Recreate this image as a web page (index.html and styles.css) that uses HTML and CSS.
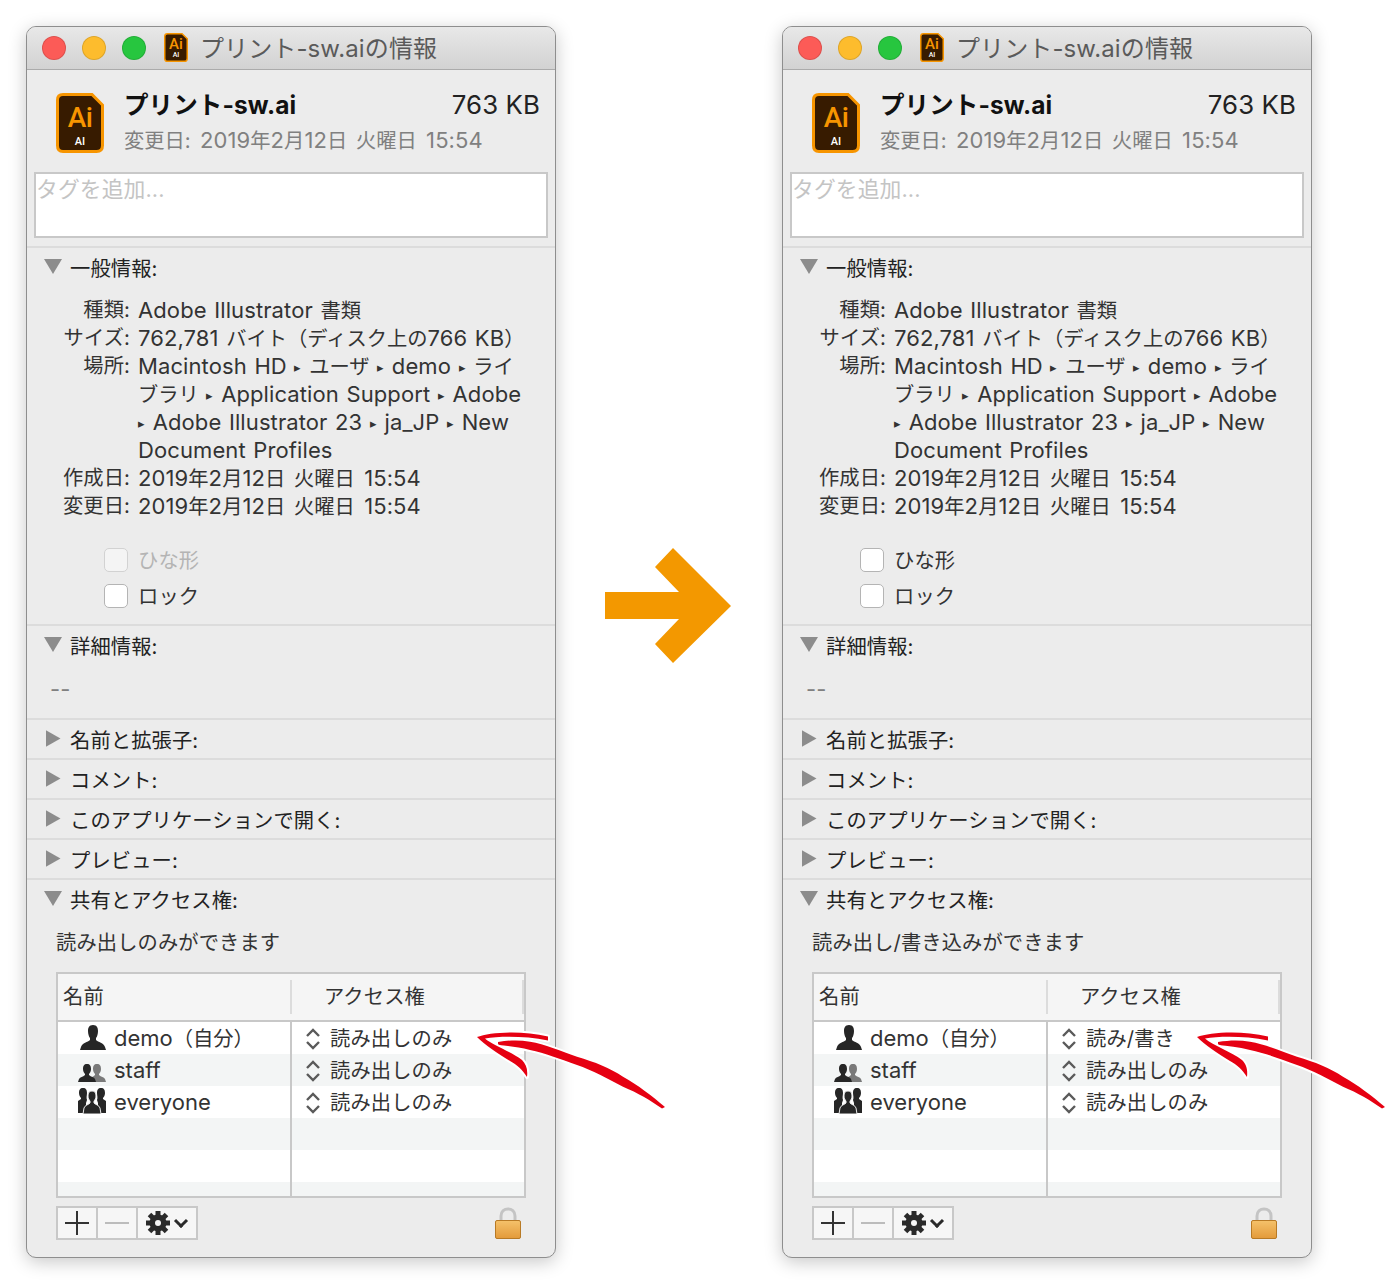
FILE: index.html
```html
<!DOCTYPE html>
<html lang="ja">
<head>
    <meta charset="UTF-8">
    <title>プリント-sw.aiの情報</title>
    <link rel="stylesheet" href="styles.css">
</head>
<body>
    <!-- shared icons -->
    <svg class="icon-defs" width="0" height="0">
        <defs>
            <linearGradient id="lock-body" x1="0" y1="0" x2="0" y2="1">
                <stop offset="0" stop-color="#f5c26b"/>
                <stop offset="1" stop-color="#e39a3a"/>
            </linearGradient>
        </defs>
        <symbol id="ai-doc" viewBox="0 0 48 60" preserveAspectRatio="none">
            <path d="M7 1.500H36L46.500 12V52.500Q46.500 58.500 40.500 58.500H7Q1.500 58.500 1.500 52.500V7Q1.500 1.500 7 1.500Z" fill="#371b00" stroke="#f79500" stroke-width="3"/>
        </symbol>
        <symbol id="chevrons" viewBox="0 0 16 24">
            <path d="M2 9L8 3L14 9M2 15L8 21L14 15" fill="none" stroke="#5a5a5a" stroke-width="2.400"/>
        </symbol>
        <symbol id="person" viewBox="0 0 28 26">
            <path d="M14 0C10 0 9 3 9 6C9 9 10 12 11 13V15C9 17 3 18 2 22L1 25H27L26 22C25 18 19 17 17 15V13C18 12 19 9 19 6C19 3 18 0 14 0Z" fill="#262626"/>
        </symbol>
        <symbol id="pair" viewBox="0 0 28 20">
            <path d="M19 2C16 2 15 4 15 7C15 9 16 11 17 12V13C15 15 13 15 12 17L13 20H28L27 17C26 15 23 15 21 13V12C22 11 23 9 23 7C23 4 22 2 19 2Z" fill="#7a7a7a"/>
            <path d="M9 2C6 2 5 4 5 7C5 9 6 11 7 12V13C5 15 2 15 1 17L0 20H18L17 17C16 15 13 15 11 13V12C12 11 13 9 13 7C13 4 12 2 9 2Z" fill="#262626"/>
        </symbol>
        <symbol id="group" viewBox="0 0 28 26">
            <path d="M5 0C2 0 1 2 1 5C1 7 2 9 3 10V11L0 13V25H8V15L9 12C8 10 9 7 9 5C9 2 8 0 5 0Z" fill="#262626"/>
            <path d="M23 0C26 0 27 2 27 5C27 7 26 9 25 10V11L28 13V25H20V15L19 12C20 10 19 7 19 5C19 2 20 0 23 0Z" fill="#262626"/>
            <path d="M14 3C11 3 10 5 10 8C10 10 11 12 12 13V15C10 17 7 17 6 20L5 26H23L22 20C21 17 18 17 16 15V13C17 12 18 10 18 8C18 5 17 3 14 3Z" fill="#262626" stroke="#ececec" stroke-width="1"/>
        </symbol>
        <symbol id="gear" viewBox="0 0 24 24">
            <g stroke="#2a2a2a" stroke-width="5">
                <path d="M12 0V24M0 12H24M3.500 3.500L20.500 20.500M20.500 3.500L3.500 20.500"/>
            </g>
            <circle cx="12" cy="12" r="8.500" fill="#2a2a2a"/>
            <circle cx="12" cy="12" r="3" fill="#f6f6f6"/>
        </symbol>
        <symbol id="lock" viewBox="0 0 26 32">
            <path d="M6 14V9C6 -0.500 20 -0.500 20 9V14" fill="none" stroke="#c4c4c4" stroke-width="3"/>
            <rect x="0.500" y="13.500" width="25" height="18" rx="1.500" fill="url(#lock-body)" stroke="#b87a25"/>
        </symbol>
        <symbol id="red-arrow" viewBox="0 0 200 90">
            <g fill="#e60012" stroke="#fff" stroke-width="4" stroke-linejoin="round" paint-order="stroke">
                <path d="M28 17C40 15 50 15 60 16.700C75 19 90 26 107 31.700C125 37 140 43 153 51.700C168 60 182 71 195 82L192 83.500C180 75 168 68 153 61.700C138 54 122 45 107 40C90 34 75 28 60 25C48 22 38 21 28 20Z"/>
                <path d="M7 12C20 7 52 5 78 11.500L78 15.500C56 11 30 11 15 13.500C22 20 42 27 52 35C56 39 58 44 57 52C52 44 47 40 40 36C27 28 15 20 7 12Z"/>
            </g>
        </symbol>
    </svg>

    <main class="page">
        <!-- before -->
        <article class="window">
            <header class="titlebar">
                <span class="light light-red"></span>
                <span class="light light-yellow"></span>
                <span class="light light-green"></span>
                <span class="ai-icon ai-icon-small"><svg class="ai-doc"><use href="#ai-doc"/></svg><b class="ai-big">Ai</b><b class="ai-tag">AI</b></span>
                <span class="title-text">プリント-sw.aiの情報</span>
            </header>
            <div class="file-head">
                <span class="ai-icon"><svg class="ai-doc"><use href="#ai-doc"/></svg><b class="ai-big">Ai</b><b class="ai-tag">AI</b></span>
                <div class="file-meta">
                    <div class="file-line">
                        <strong class="file-name">プリント-sw.ai</strong>
                        <span class="file-size">763 KB</span>
                    </div>
                    <div class="file-date"><span class="ja">変更日:</span> 2019<span class="ja">年</span>2<span class="ja">月</span>12<span class="ja">日 火曜日</span> 15:54</div>
                </div>
            </div>
            <div class="tags">タグを追加...</div>

            <section class="panel panel-general">
                <h2 class="panel-head"><span class="toggle"><i class="tri-down"></i></span>一般情報:</h2>
                <dl class="info">
                    <dt>種類:</dt><dd>Adobe Illustrator <span class="ja">書類</span></dd>
                    <dt>サイズ:</dt><dd>762,781 <span class="ja">バイト（ディスク上の</span>766 KB<span class="ja">）</span></dd>
                    <dt>場所:</dt><dd>Macintosh HD <b class="sep">▸</b> <span class="ja">ユーザ</span> <b class="sep">▸</b> demo <b class="sep">▸</b> <span class="ja">ライ</span><br><span class="ja">ブラリ</span> <b class="sep">▸</b> Application Support <b class="sep">▸</b> Adobe<br><b class="sep">▸</b> Adobe Illustrator 23 <b class="sep">▸</b> ja_JP <b class="sep">▸</b> New<br>Document Profiles</dd>
                    <dt>作成日:</dt><dd class="date">2019<span class="ja">年</span>2<span class="ja">月</span>12<span class="ja">日 火曜日</span> 15:54</dd>
                    <dt>変更日:</dt><dd class="date">2019<span class="ja">年</span>2<span class="ja">月</span>12<span class="ja">日 火曜日</span> 15:54</dd>
                </dl>
                <div class="checks">
                    <div class="check check-off"><span class="box"></span>ひな形</div>
                    <div class="check"><span class="box"></span>ロック</div>
                </div>
            </section>

            <section class="panel panel-detail">
                <h2 class="panel-head"><span class="toggle"><i class="tri-down"></i></span>詳細情報:</h2>
                <p class="dashes">--</p>
            </section>
            <section class="panel"><h2 class="panel-head"><span class="toggle"><i class="tri-right"></i></span>名前と拡張子:</h2></section>
            <section class="panel"><h2 class="panel-head"><span class="toggle"><i class="tri-right"></i></span>コメント:</h2></section>
            <section class="panel"><h2 class="panel-head"><span class="toggle"><i class="tri-right"></i></span>このアプリケーションで開く:</h2></section>
            <section class="panel"><h2 class="panel-head"><span class="toggle"><i class="tri-right"></i></span>プレビュー:</h2></section>

            <section class="panel">
                <h2 class="panel-head"><span class="toggle"><i class="tri-down"></i></span>共有とアクセス権:</h2>
                <p class="share-note">読み出しのみができます</p>
                <div class="perm-table">
                    <div class="perm-head">
                        <span class="col-name">名前</span>
                        <span class="col-perm">アクセス権</span>
                    </div>
                    <div class="perm-row">
                        <span class="cell-name"><svg class="who who-one"><use href="#person"/></svg>demo<span class="ja">（自分）</span></span>
                        <span class="cell-perm"><svg class="chev"><use href="#chevrons"/></svg>読み出しのみ</span>
                    </div>
                    <div class="perm-row">
                        <span class="cell-name"><svg class="who who-pair"><use href="#pair"/></svg>staff</span>
                        <span class="cell-perm"><svg class="chev"><use href="#chevrons"/></svg>読み出しのみ</span>
                    </div>
                    <div class="perm-row">
                        <span class="cell-name"><svg class="who who-group"><use href="#group"/></svg>everyone</span>
                        <span class="cell-perm"><svg class="chev"><use href="#chevrons"/></svg>読み出しのみ</span>
                    </div>
                    <div class="perm-row"><span class="cell-name"></span><span class="cell-perm"></span></div>
                    <div class="perm-row"><span class="cell-name"></span><span class="cell-perm"></span></div>
                    <div class="perm-row perm-row-cut"><span class="cell-name"></span><span class="cell-perm"></span></div>
                </div>
                <div class="perm-tools">
                    <div class="btn-group">
                        <span class="btn btn-add"></span>
                        <span class="btn btn-remove"></span>
                        <span class="btn btn-gear"><svg class="gear"><use href="#gear"/></svg><i class="gear-caret"></i></span>
                    </div>
                    <svg class="lock"><use href="#lock"/></svg>
                </div>
            </section>

            <svg class="red-arrow"><use href="#red-arrow"/></svg>
        </article>

        <div class="between">
            <svg class="big-arrow" viewBox="0 0 126 115">
                <polygon points="0,44 74,44 50,19 68,0 126,58 68,115 50,96 74,71 0,71" fill="#f39800"/>
            </svg>
        </div>

        <!-- after -->
        <article class="window">
            <header class="titlebar">
                <span class="light light-red"></span>
                <span class="light light-yellow"></span>
                <span class="light light-green"></span>
                <span class="ai-icon ai-icon-small"><svg class="ai-doc"><use href="#ai-doc"/></svg><b class="ai-big">Ai</b><b class="ai-tag">AI</b></span>
                <span class="title-text">プリント-sw.aiの情報</span>
            </header>
            <div class="file-head">
                <span class="ai-icon"><svg class="ai-doc"><use href="#ai-doc"/></svg><b class="ai-big">Ai</b><b class="ai-tag">AI</b></span>
                <div class="file-meta">
                    <div class="file-line">
                        <strong class="file-name">プリント-sw.ai</strong>
                        <span class="file-size">763 KB</span>
                    </div>
                    <div class="file-date"><span class="ja">変更日:</span> 2019<span class="ja">年</span>2<span class="ja">月</span>12<span class="ja">日 火曜日</span> 15:54</div>
                </div>
            </div>
            <div class="tags">タグを追加...</div>

            <section class="panel panel-general">
                <h2 class="panel-head"><span class="toggle"><i class="tri-down"></i></span>一般情報:</h2>
                <dl class="info">
                    <dt>種類:</dt><dd>Adobe Illustrator <span class="ja">書類</span></dd>
                    <dt>サイズ:</dt><dd>762,781 <span class="ja">バイト（ディスク上の</span>766 KB<span class="ja">）</span></dd>
                    <dt>場所:</dt><dd>Macintosh HD <b class="sep">▸</b> <span class="ja">ユーザ</span> <b class="sep">▸</b> demo <b class="sep">▸</b> <span class="ja">ライ</span><br><span class="ja">ブラリ</span> <b class="sep">▸</b> Application Support <b class="sep">▸</b> Adobe<br><b class="sep">▸</b> Adobe Illustrator 23 <b class="sep">▸</b> ja_JP <b class="sep">▸</b> New<br>Document Profiles</dd>
                    <dt>作成日:</dt><dd class="date">2019<span class="ja">年</span>2<span class="ja">月</span>12<span class="ja">日 火曜日</span> 15:54</dd>
                    <dt>変更日:</dt><dd class="date">2019<span class="ja">年</span>2<span class="ja">月</span>12<span class="ja">日 火曜日</span> 15:54</dd>
                </dl>
                <div class="checks">
                    <div class="check"><span class="box"></span>ひな形</div>
                    <div class="check"><span class="box"></span>ロック</div>
                </div>
            </section>

            <section class="panel panel-detail">
                <h2 class="panel-head"><span class="toggle"><i class="tri-down"></i></span>詳細情報:</h2>
                <p class="dashes">--</p>
            </section>
            <section class="panel"><h2 class="panel-head"><span class="toggle"><i class="tri-right"></i></span>名前と拡張子:</h2></section>
            <section class="panel"><h2 class="panel-head"><span class="toggle"><i class="tri-right"></i></span>コメント:</h2></section>
            <section class="panel"><h2 class="panel-head"><span class="toggle"><i class="tri-right"></i></span>このアプリケーションで開く:</h2></section>
            <section class="panel"><h2 class="panel-head"><span class="toggle"><i class="tri-right"></i></span>プレビュー:</h2></section>

            <section class="panel">
                <h2 class="panel-head"><span class="toggle"><i class="tri-down"></i></span>共有とアクセス権:</h2>
                <p class="share-note">読み出し/書き込みができます</p>
                <div class="perm-table">
                    <div class="perm-head">
                        <span class="col-name">名前</span>
                        <span class="col-perm">アクセス権</span>
                    </div>
                    <div class="perm-row">
                        <span class="cell-name"><svg class="who who-one"><use href="#person"/></svg>demo<span class="ja">（自分）</span></span>
                        <span class="cell-perm"><svg class="chev"><use href="#chevrons"/></svg>読み/書き</span>
                    </div>
                    <div class="perm-row">
                        <span class="cell-name"><svg class="who who-pair"><use href="#pair"/></svg>staff</span>
                        <span class="cell-perm"><svg class="chev"><use href="#chevrons"/></svg>読み出しのみ</span>
                    </div>
                    <div class="perm-row">
                        <span class="cell-name"><svg class="who who-group"><use href="#group"/></svg>everyone</span>
                        <span class="cell-perm"><svg class="chev"><use href="#chevrons"/></svg>読み出しのみ</span>
                    </div>
                    <div class="perm-row"><span class="cell-name"></span><span class="cell-perm"></span></div>
                    <div class="perm-row"><span class="cell-name"></span><span class="cell-perm"></span></div>
                    <div class="perm-row perm-row-cut"><span class="cell-name"></span><span class="cell-perm"></span></div>
                </div>
                <div class="perm-tools">
                    <div class="btn-group">
                        <span class="btn btn-add"></span>
                        <span class="btn btn-remove"></span>
                        <span class="btn btn-gear"><svg class="gear"><use href="#gear"/></svg><i class="gear-caret"></i></span>
                    </div>
                    <svg class="lock"><use href="#lock"/></svg>
                </div>
            </section>

            <svg class="red-arrow red-arrow-after"><use href="#red-arrow"/></svg>
        </article>
    </main>
</body>
</html>
```

FILE: styles.css
```css
/* General */
body {
    margin: 0;
    background-color: #fff;
    color: #333;
    font-family: Inter, "Noto Sans CJK JP", sans-serif;
    font-size: 22px;
    letter-spacing: 0.1px;
}

/* the Japanese glyphs sit smaller than the latin ones */
.ja {
    font-size: 20.3px;
    letter-spacing: 0;
    line-height: 0;
}

.icon-defs {
    position: absolute;
}

.page {
    display: flex;
    padding: 26px 26px 27px;
    height: 1232px;
}

/* Window */
.window {
    position: relative;
    box-sizing: border-box;
    width: 530px;
    height: 1232px;
    flex: none;
    background-color: #ececec;
    border: 1px solid #8e8e8e;
    border-radius: 10px;
    box-shadow: 0 4px 18px rgba(0, 0, 0, 0.22);
}

.titlebar {
    display: flex;
    align-items: center;
    box-sizing: border-box;
    height: 43px;
    padding-left: 15px;
    background: linear-gradient(#e8e8e8, #d2d2d2);
    border-bottom: 1px solid #ababab;
    border-radius: 9px 9px 0 0;
}

.light {
    box-sizing: border-box;
    width: 24px;
    height: 24px;
    margin-right: 16px;
    border-radius: 50%;
    border: 1px solid rgba(0, 0, 0, 0.12);
}

.light-red { background-color: #fc5b57; }
.light-yellow { background-color: #fdbc2d; }
.light-green { background-color: #27c63f; }

.title-text {
    padding-bottom: 3px;
    margin-left: 12px;
    font-size: 24px;
    color: #5a5a5a;
    white-space: nowrap;
}

/* Illustrator document icon */
.ai-icon {
    position: relative;
    flex: none;
    display: flex;
    flex-direction: column;
    align-items: center;
    box-sizing: border-box;
    width: 48px;
    height: 60px;
    padding-top: 10px;
    font-family: Roboto, sans-serif;
    letter-spacing: 0;
}

.ai-doc {
    position: absolute;
    left: 0;
    top: 0;
    width: 100%;
    height: 100%;
}

.ai-big {
    position: relative;
    font-size: 28px;
    font-weight: 500;
    line-height: 29px;
    letter-spacing: -0.5px;
    color: #f79500;
}

.ai-tag {
    position: relative;
    margin-top: 4px;
    font-size: 11px;
    font-weight: 500;
    line-height: 11px;
    color: #fff;
}

.ai-icon-small {
    width: 24px;
    height: 29px;
    margin-left: 2px;
    margin-bottom: 2px;
    padding-top: 3px;
}

.ai-icon-small .ai-big {
    font-size: 15px;
    line-height: 16px;
    letter-spacing: 0;
}

.ai-icon-small .ai-tag {
    margin-top: 0;
    font-size: 7px;
    line-height: 7px;
}

/* File header */
.file-head {
    display: flex;
    gap: 20px;
    height: 102px;
    box-sizing: border-box;
    padding: 23px 15px 0 29px;
}

.file-meta {
    flex: 1;
    margin-top: -3px;
}

.file-line {
    display: flex;
    justify-content: space-between;
    line-height: 30px;
}

.file-name {
    font-size: 24.500px;
    color: #111;
}

.file-size {
    font-size: 25.800px;
    color: #222;
}

.file-date {
    margin-top: 5px;
    line-height: 30px;
    color: #808080;
    word-spacing: 3px;
}

.tags {
    box-sizing: border-box;
    height: 66px;
    margin: 0 7px 8px 7px;
    background-color: #fff;
    border: 2px solid #c8c8c8;
    color: #c4c4c4;
    line-height: 31px;
    font-size: 21.800px;
}

/* Panels */
.panel {
    border-top: 2px solid #dcdcdc;
}

.panel-head {
    display: flex;
    align-items: center;
    height: 38px;
    margin: 0;
    padding-left: 17px;
    font-size: 20.3px;
    font-weight: 400;
    color: #222;
}

.toggle {
    display: flex;
    justify-content: center;
    width: 18px;
    margin: -1px 8px 0 0;
}

.tri-down {
    width: 18px;
    height: 15px;
    background-color: #8c8c8c;
    clip-path: polygon(0 0, 100% 0, 50% 100%);
}

.tri-right {
    width: 15px;
    height: 17px;
    background-color: #8c8c8c;
    clip-path: polygon(0 0, 100% 50%, 0 100%);
}

.info {
    display: grid;
    grid-template-columns: 103px 1fr;
    column-gap: 8px;
    margin: 10px 0 0;
    line-height: 28px;
}

.info dt {
    font-size: 20.3px;
    text-align: right;
    white-space: nowrap;
}

.info dd {
    margin: 0;
    white-space: nowrap;
    word-spacing: 1.3px;
}

.info dd.date {
    word-spacing: 3px;
}

.sep {
    font-size: 13px;
    font-weight: 400;
    line-height: 0;
    vertical-align: 2px;
}

.checks {
    margin-top: 21px;
    padding: 0 0 11px 77px;
    font-size: 20.3px;
}

.check {
    display: flex;
    align-items: center;
    gap: 10px;
    height: 36px;
}

.box {
    box-sizing: border-box;
    width: 24px;
    height: 24px;
    margin-top: 2px;
    background-color: #fff;
    border: 1px solid #b4b4b4;
    border-radius: 5px;
}

.check-off {
    color: #b4b4b4;
}

.check-off .box {
    background-color: #f4f4f4;
    border-color: #d2d2d2;
}

.dashes {
    margin: 11px 0 15px 23px;
    line-height: 28px;
    color: #808080;
}

.share-note {
    margin: 11px 0 15px 29px;
    line-height: 28px;
    font-size: 20.3px;
}

/* Permissions table */
.perm-table {
    box-sizing: border-box;
    width: 470px;
    height: 226px;
    margin-left: 29px;
    overflow: hidden;
    background-color: #fff;
    border: 2px solid #c8c8c8;
}

.perm-head {
    display: grid;
    grid-template-columns: 234px 1fr;
    box-sizing: border-box;
    height: 48px;
    padding: 6px 0;
    background-color: #f5f5f5;
    border-bottom: 2px solid #c8c8c8;
    font-size: 20.3px;
    line-height: 34px;
}

.col-name {
    padding-left: 5px;
    border-right: 2px solid #dcdcdc;
}

.col-perm {
    padding-left: 32px;
    border-right: 2px solid #dcdcdc;
}

.perm-row {
    display: grid;
    grid-template-columns: 234px 1fr;
    height: 32px;
    line-height: 32px;
}

.perm-row:nth-child(odd) {
    background-color: #f3f5f5;
}

.perm-row-cut {
    height: 14px;
}

.cell-name {
    position: relative;
    box-sizing: border-box;
    padding-left: 56px;
    border-right: 2px solid #c8c8c8;
    letter-spacing: 0;
    white-space: nowrap;
}

.cell-perm {
    display: flex;
    align-items: center;
    gap: 9px;
    padding: 1px 0 0 13px;
    font-size: 20.3px;
    white-space: nowrap;
}

.chev {
    width: 16px;
    height: 24px;
    flex: none;
    margin-top: -1px;
}

.who {
    position: absolute;
}

.who-one {
    left: 21px;
    top: 3px;
    width: 28px;
    height: 26px;
}

.who-pair {
    left: 20px;
    top: 8px;
    width: 28px;
    height: 20px;
}

.who-group {
    left: 20px;
    top: 2px;
    width: 28px;
    height: 26px;
}

.perm-tools {
    display: flex;
    justify-content: space-between;
    margin: 8px 34px 0 29px;
}

.btn-group {
    display: flex;
    height: 34px;
    box-sizing: border-box;
    background-color: #f6f6f6;
    border: 2px solid #c8c8c8;
}

.btn {
    position: relative;
    display: flex;
    align-items: center;
    justify-content: center;
    box-sizing: border-box;
    width: 40px;
    border-right: 2px solid #c8c8c8;
}

.btn-add::before,
.btn-add::after,
.btn-remove::before {
    content: "";
    position: absolute;
    left: 7px;
    top: 14px;
    width: 24px;
    height: 2px;
    background-color: #333;
}

.btn-add::after {
    left: 18px;
    top: 3px;
    width: 2px;
    height: 24px;
}

.btn-remove::before {
    background-color: #bcbcbc;
}

.btn-gear {
    justify-content: flex-start;
    width: 58px;
    padding-left: 8px;
    gap: 6px;
    border-right: none;
}

.gear {
    width: 24px;
    height: 24px;
}

.gear-caret {
    width: 10px;
    height: 10px;
    margin-top: -5px;
    border-right: 3px solid #2a2a2a;
    border-bottom: 3px solid #2a2a2a;
    box-sizing: border-box;
    transform: rotate(45deg);
}

.lock {
    width: 26px;
    height: 32px;
    margin-top: 1px;
}

/* Overlays */
.red-arrow {
    position: absolute;
    left: 443px;
    top: 998px;
    width: 200px;
    height: 90px;
    overflow: visible;
}

.red-arrow-after {
    left: 407px;
}

/* Arrow between the windows */
.between {
    flex: none;
    display: flex;
    justify-content: center;
    width: 226px;
    padding: 522px 2px 0 0;
    box-sizing: border-box;
}

.big-arrow {
    width: 126px;
    height: 115px;
}
```
